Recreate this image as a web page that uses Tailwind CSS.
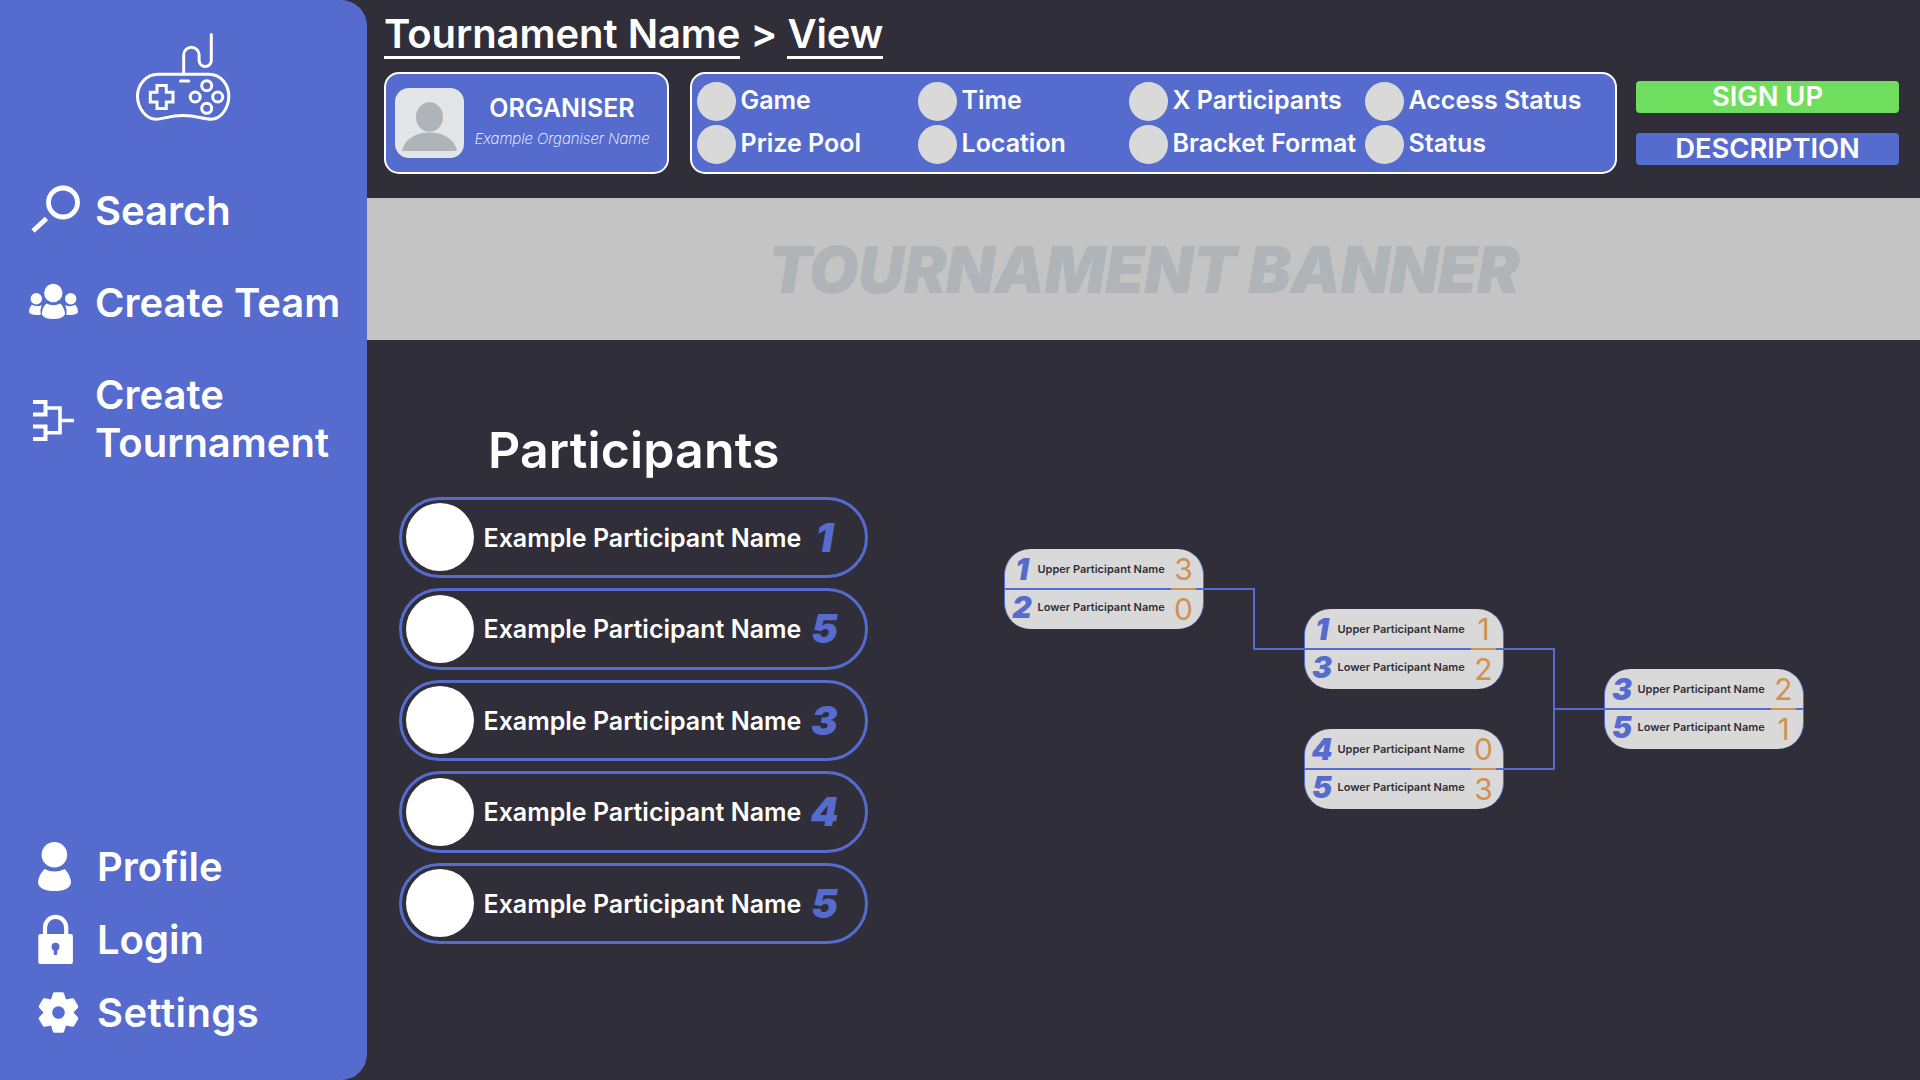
<!DOCTYPE html>
<html lang="en">
<head>
<meta charset="utf-8">
<title>Tournament View</title>
<script src="https://cdn.jsdelivr.net/npm/@tailwindcss/browser@4"></script>
</head>
<body class="flex h-[1080px] w-[1920px] overflow-hidden bg-[#302e38] font-['Inter',sans-serif] font-semibold text-white [font-variant-ligatures:none]">

<aside class="flex h-full w-[367px] shrink-0 flex-col rounded-r-[26px] bg-[#566bce] text-[40px] leading-[48px]">
  <svg class="mt-5 ml-[120px] h-[110px] w-[130px] shrink-0" viewBox="120 20 130 110" fill="none" stroke="white" stroke-width="3" stroke-linecap="round">
    <path d="M183.7 73V55a7.7 7.7 0 0 1 15.4 0V60.500a6.100 6.100 0 0 0 12.200 0V34.500"/>
    <path d="M158 74.200H209C221 74.200 228.800 85 228.800 96C228.800 108 221 119.200 211 119.200C203 119.200 197 115.600 183.300 115.600C169 115.600 163 119.200 156 119.200C146 119.200 137.500 108 137.500 96C137.500 85 146 74.200 158 74.200Z"/>
    <path d="M180.500 81H188.700M157 85.500H166.300V92.300H173V102H166.300V108.500H157V102H150.300V92.300H157Z"/>
    <circle cx="206.700" cy="85.700" r="5"/><circle cx="195.200" cy="97" r="5"/><circle cx="217.700" cy="97" r="5"/><circle cx="206.700" cy="108.300" r="5"/>
  </svg>
  <nav class="mt-[57px] flex flex-col gap-11">
    <a class="flex h-12 items-center">
      <svg class="mr-[15px] h-[60px] w-20 shrink-0" viewBox="0 181 80 60" fill="none" stroke="white"><circle cx="63" cy="202.500" r="14.500" stroke-width="4.800"/><path d="M33 231L46.500 218.500" stroke-width="4.800"/></svg>
      Search
    </a>
    <a class="flex h-12 items-center">
      <svg class="mr-[15px] h-[60px] w-20 shrink-0" viewBox="0 273 80 60" fill="white">
        <circle cx="53.300" cy="293" r="9.200"/><circle cx="36.300" cy="298.700" r="5.700"/><circle cx="70.700" cy="298.700" r="5.700"/>
        <path d="M46.300 303.500Q53.300 306.800 60.500 303.500Q65 309 65 314.500Q62 319 53.300 319Q44.500 319 41.800 314.500Q42 308 46.300 303.500Z"/>
        <path d="M31.800 304.800Q36.500 307.200 41.800 305.300Q39.500 310 40.800 314.800Q29 315.800 29 311.500Q29.500 307 31.800 304.800ZM75.200 304.800Q70.500 307.200 65.200 305.300Q67.500 310 66.300 314.800Q78 315.800 78 311.500Q77.500 307 75.200 304.800Z"/>
      </svg>
      Create Team
    </a>
    <a class="flex h-24 items-center">
      <svg class="mr-[15px] h-[60px] w-20 shrink-0" viewBox="0 389 80 60" fill="none" stroke="white" stroke-width="4"><path d="M33 402H45.500V414.500H33M33 426.500H45.500V439H33"/><path stroke-width="3.600" d="M47 408H60V432.700H47M60 420.500H74"/></svg>
      <span>Create<br>Tournament</span>
    </a>
  </nav>
  <nav class="mt-auto mb-[43px] flex flex-col gap-[25px]">
    <a class="flex h-12 items-center">
      <svg class="mr-[17px] h-[60px] w-20 shrink-0" viewBox="0 837 80 60" fill="white"><circle cx="54.400" cy="854.700" r="12.800"/><path d="M44.500 869Q54.500 874 64.800 869Q71 876 71 883Q69 891 54.500 891Q40 891 38 883Q38 876 44.500 869Z"/></svg>
      Profile
    </a>
    <a class="flex h-12 items-center">
      <svg class="mr-[17px] h-[60px] w-20 shrink-0" viewBox="0 910 80 60"><path d="M45 936V927.500a10.600 10.600 0 0 1 21.200 0V936" fill="none" stroke="white" stroke-width="4.200"/><rect x="38.300" y="934" width="34.600" height="30" rx="2" fill="white"/><g fill="#566bce"><circle cx="55.500" cy="946.700" r="4"/><rect x="53.700" y="947" width="3.600" height="8" rx="1.600"/></g></svg>
      Login
    </a>
    <a class="flex h-12 items-center tracking-[0.45px]">
      <svg class="mr-[17px] h-[60px] w-20 shrink-0" viewBox="0 983 80 60"><g transform="translate(58.500 1012.500)" fill="white" stroke="white" stroke-linejoin="round" stroke-width="4">
        <circle r="12.500"/><path id="tooth" d="M-3.700 -18.300H3.700L6 -11H-6Z"/>
        <use href="#tooth" transform="rotate(60)"/><use href="#tooth" transform="rotate(120)"/><use href="#tooth" transform="rotate(180)"/><use href="#tooth" transform="rotate(240)"/><use href="#tooth" transform="rotate(300)"/>
        <circle r="6.300" fill="#566bce" stroke="none"/></g></svg>
      Settings
    </a>
  </nav>
</aside>

<div class="flex min-w-0 flex-1 flex-col">
  <header class="flex h-[198px] shrink-0 flex-col pl-[17px]">
    <h1 class="mt-[9px] flex h-[50px] text-[40px] leading-[49px] tracking-[-0.05px] whitespace-pre"><span class="h-[50px] border-b-3 border-white">Tournament Name</span><span> &gt; </span><span class="h-[50px] border-b-3 border-white">View</span></h1>
    <div class="mt-[13px] flex h-[102px]">
      <section class="flex w-[285px] items-center rounded-[15px] border-2 border-white bg-[#566bce] pl-[9px]">
        <svg class="h-[70px] w-[69px] shrink-0" viewBox="0 0 69 70"><rect width="69" height="70" rx="14" fill="#e4e5e7"/><ellipse cx="34.500" cy="29" rx="13.500" ry="14.700" fill="#aeb4b8"/><path d="M7 63C9 52 20 44.500 34.500 44.500S60 52 62 63Z" fill="#aeb4b8"/></svg>
        <div class="flex flex-1 flex-col items-center pr-[7px]">
          <h2 class="text-[25px] leading-[30px]">ORGANISER</h2>
          <p class="text-[15px] leading-[31px] font-extralight tracking-[-0.05px] whitespace-nowrap italic">Example Organiser Name</p>
        </div>
      </section>
      <section class="ml-[21px] grid w-[927px] grid-cols-[221px_211px_236px_1fr] grid-rows-[39px_39px] content-start gap-y-[3.500px] rounded-[15px] border-2 border-white bg-[#566bce] pt-2 pl-[5px] text-[25px] leading-[37px] whitespace-nowrap">
        <div class="flex gap-[4.500px]"><i class="w-[39px] shrink-0 rounded-full bg-[#d9d9d9]"></i>Game</div>
        <div class="flex gap-[4.500px]"><i class="w-[39px] shrink-0 rounded-full bg-[#d9d9d9]"></i>Time</div>
        <div class="flex gap-[4.500px]"><i class="w-[39px] shrink-0 rounded-full bg-[#d9d9d9]"></i>X Participants</div>
        <div class="flex gap-[4.500px]"><i class="w-[39px] shrink-0 rounded-full bg-[#d9d9d9]"></i>Access Status</div>
        <div class="flex gap-[4.500px]"><i class="w-[39px] shrink-0 rounded-full bg-[#d9d9d9]"></i>Prize Pool</div>
        <div class="flex gap-[4.500px]"><i class="w-[39px] shrink-0 rounded-full bg-[#d9d9d9]"></i>Location</div>
        <div class="flex gap-[4.500px]"><i class="w-[39px] shrink-0 rounded-full bg-[#d9d9d9]"></i>Bracket Format</div>
        <div class="flex gap-[4.500px]"><i class="w-[39px] shrink-0 rounded-full bg-[#d9d9d9]"></i>Status</div>
      </section>
      <div class="mt-[9px] ml-[19px] flex w-[263px] flex-col gap-5 text-center text-[27.300px] leading-[31px]">
        <button class="h-8 rounded bg-[#6fde5e] pb-px">SIGN UP</button>
        <button class="h-8 rounded bg-[#566bce] pb-px">DESCRIPTION</button>
      </div>
    </div>
  </header>

  <div class="flex h-[142px] shrink-0 items-center justify-center bg-[#c4c4c4] pt-px text-[64px] leading-[78px] font-black tracking-[-0.65px] whitespace-nowrap text-[#aeb4b8] italic">TOURNAMENT BANNER</div>

  <main class="flex flex-1 pl-8">
    <section class="w-[469px] shrink-0 pt-[80.500px]">
      <h2 class="h-[76px] pl-[89px] text-[50px] leading-[59px] tracking-[0.15px]">Participants</h2>
      <ul id="participants" class="flex flex-col gap-2.5"></ul>
    </section>
    <section id="bracket" class="relative ml-[136px] h-[740px] w-[916px]">
      <svg class="absolute inset-0 h-full w-full" viewBox="1004 340 916 740" fill="none" stroke="#566bce" stroke-width="2"><path d="M1204 589H1254V649H1304M1504 649H1554V769H1504M1554 709H1604"/></svg>
    </section>
  </main>
</div>

<script>
  document.getElementById('participants').innerHTML = [1, 5, 3, 4, 5].map(seed => `
    <li class="flex h-[81.500px] items-center rounded-full border-3 border-[#566bce] pl-1">
      <i class="size-[68px] shrink-0 rounded-full bg-white"></i>
      <span class="ml-[9.500px] w-[317.500px] shrink-0 pt-px text-[25px] leading-[30px] whitespace-nowrap">Example Participant Name</span>
      <b class="ml-[5.500px] w-9 pt-px text-center text-[40px] leading-[48px] font-black text-[#566bce] italic">${seed}</b>
    </li>`).join('');

  // Each match: left, top, then seed and score for the upper and lower side.
  const matches = [
    [0, 208.5, 1, 3, 2, 0],
    [300, 268.5, 1, 1, 3, 2],
    [300, 388.5, 4, 0, 5, 3],
    [600, 328.5, 3, 2, 5, 1],
  ];
  const side = (seed, label, score, rowPad, scorePad) => `
    <div class="flex h-[39px] items-center text-[30px] leading-9 ${rowPad}">
      <b class="ml-1 w-[26px] text-center font-black text-[#566bce] italic">${seed}</b>
      <span class="ml-[2.500px] w-[128px] text-[11px] leading-4 whitespace-nowrap text-[#302e38]">${label} Participant Name</span>
      <span class="ml-[5.500px] w-[25px] text-center font-normal text-[#d19152] ${scorePad}">${score}</span>
    </div>`;
  document.getElementById('bracket').insertAdjacentHTML('beforeend', matches.map(([x, y, s1, r1, s2, r2]) => `
    <div class="absolute h-[80.500px] w-[200px] overflow-hidden rounded-[26px] border-x border-[#566bce] bg-[#d9d9d9]" style="left:${x}px;top:${y}px">
      ${side(s1, 'Upper', r1, 'pt-0.5', 'pt-0')}
      <div class="flex h-[2.500px] bg-[#566bce]"><i class="ml-[166px] w-[25px] bg-[#d19152]"></i></div>
      ${side(s2, 'Lower', r2, 'pb-[5px]', 'pt-[3px]')}
    </div>`).join(''));
</script>
</body>
</html>
